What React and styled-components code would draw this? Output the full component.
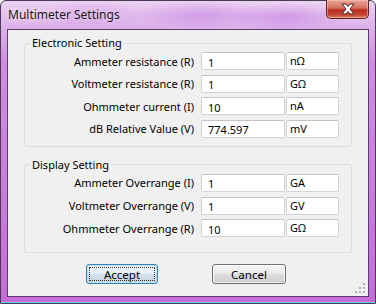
import React from 'react';
import styled, { createGlobalStyle } from 'styled-components';

const GlobalStyle = createGlobalStyle`
  html, body {
    margin: 0;
    padding: 0;
    background: #ffffff;
  }
  body {
    font-family: "Noto Sans", "DejaVu Sans", sans-serif;
    font-size: 11px;
    color: #000;
  }
`;

const electronic = [
  { label: 'Ammeter resistance (R)', value: '1', unit: 'nΩ' },
  { label: 'Voltmeter resistance (R)', value: '1', unit: 'GΩ' },
  { label: 'Ohmmeter current (I)', value: '10', unit: 'nA' },
  { label: 'dB Relative Value (V)', value: '774.597', unit: 'mV' },
];

const display = [
  { label: 'Ammeter Overrange (I)', value: '1', unit: 'GA' },
  { label: 'Voltmeter Overrange (V)', value: '1', unit: 'GV' },
  { label: 'Ohmmeter Overrange (R)', value: '10', unit: 'GΩ' },
];

const App = () => {
  return (
    <>
      <GlobalStyle />
      <Window>
        <TitleBar>
          <Title>Multimeter Settings</Title>
          <CloseButton aria-label="Close">
            <svg width="16" height="12" viewBox="0 0 16 12">
              <path
                d="M2 1 L6 1 L8 3.5 L10 1 L14 1 L10 6 L14 11 L10 11 L8 8.5 L6 11 L2 11 L6 6 Z"
                fill="#ffffff"
                stroke="#4a1e1e"
                strokeWidth="1"
                strokeLinejoin="round"
              />
            </svg>
          </CloseButton>
        </TitleBar>
        <Client>
          <Group>
            <Legend>Electronic Setting</Legend>
            <Rows>
              {electronic.map(row => (
                <React.Fragment key={row.label}>
                  <Label>{row.label}</Label>
                  <ValueBox>{row.value}</ValueBox>
                  <UnitBox>{row.unit}</UnitBox>
                </React.Fragment>
              ))}
            </Rows>
          </Group>

          <Group $bottom={15}>
            <Legend>Display Setting</Legend>
            <Rows>
              {display.map(row => (
                <React.Fragment key={row.label}>
                  <Label>{row.label}</Label>
                  <ValueBox>{row.value}</ValueBox>
                  <UnitBox>{row.unit}</UnitBox>
                </React.Fragment>
              ))}
            </Rows>
          </Group>

          <ButtonRow>
            <Button $default $width={72}>
              <FocusRing>Accept</FocusRing>
            </Button>
            <Button $width={74}>Cancel</Button>
          </ButtonRow>

          <Grip width="11" height="11" viewBox="0 0 11 11">
            {[[8, 0], [8, 4], [4, 4], [8, 8], [4, 8], [0, 8]].map(([x, y]) => (
              <rect key={`${x}-${y}`} x={x} y={y} width="2" height="2" fill="#b4b4b4" />
            ))}
          </Grip>
        </Client>
      </Window>
    </>
  );
};

const Window = styled.div`
  box-sizing: border-box;
  width: 376px;
  height: 304px;
  display: flex;
  flex-direction: column;
  border: 1px solid #4b3a55;
  border-radius: 6px 6px 0 0;
  padding: 0 6px 6px 6px;
  background:
    radial-gradient(ellipse 60px 14px at 90px 14px, rgba(190, 120, 225, 0.35), transparent),
    radial-gradient(ellipse 70px 14px at 200px 14px, rgba(180, 100, 220, 0.4), transparent),
    radial-gradient(ellipse 60px 14px at 285px 16px, rgba(180, 100, 220, 0.4), transparent),
    linear-gradient(to bottom, #ecd2f2 0px, #ddb2ea 26px, #cf8ee3 60px, #c46dd9 100%);
  box-shadow: inset 0 -1px 0 #5fd3e8;
`;

const TitleBar = styled.div`
  height: 28px;
  display: flex;
  justify-content: space-between;
  align-items: flex-start;
`;

const Title = styled.div`
  padding: 6px 0 0 1px;
  font-family: "Noto Sans", "DejaVu Sans", sans-serif;
  font-size: 12px;
  line-height: 16px;
  color: #1a1a1a;
  text-shadow: 0 0 6px rgba(255, 255, 255, 0.9);
`;

const CloseButton = styled.div`
  box-sizing: border-box;
  width: 43px;
  height: 19px;
  margin-top: -1px;
  display: flex;
  align-items: center;
  justify-content: center;
  border: 1px solid #5a2424;
  border-top: none;
  border-radius: 0 0 5px 5px;
  background: linear-gradient(to bottom, #e8a697 0%, #d46f5f 45%, #b92c1d 55%, #c94a36 85%, #e08a6c 100%);
  box-shadow: inset 0 0 0 1px rgba(255, 200, 190, 0.5);
`;

const Client = styled.div`
  position: relative;
  flex: 1;
  display: flex;
  flex-direction: column;
  border: 1px solid #5b3b6b;
  background: #f0f0f0;
  padding: 6px 16px 0 16px;
`;

const Group = styled.fieldset`
  margin: 0 0 11px 0;
  padding: 2px 12px ${props => props.$bottom || 8}px 0;
  border: 1px solid #d5dfe5;
  border-radius: 3px;
  min-width: 0;
`;

const Legend = styled.legend`
  margin-left: 5px;
  padding: 0 2px;
  font-size: 11px;
  line-height: 14px;
  color: #000;
`;

const Rows = styled.div`
  display: grid;
  grid-template-columns: 1fr 84px 54px;
  grid-auto-rows: 18px;
  row-gap: 4.67px;
  align-items: center;
`;

const Label = styled.div`
  text-align: right;
  padding-right: 7px;
  font-size: 11px;
  white-space: nowrap;
`;

const Field = styled.div`
  box-sizing: border-box;
  height: 18px;
  display: flex;
  align-items: center;
  background: #ffffff;
  border: 1px solid #d3d3d3;
  border-top-color: #c4c4c4;
  border-radius: 2px;
  font-size: 11px;
  white-space: nowrap;
`;

const ValueBox = styled(Field)`
  padding: 2px 0 0 6px;
`;

const UnitBox = styled(Field)`
  margin-left: 1px;
  padding: 0 0 1px 3px;
`;

const ButtonRow = styled.div`
  display: flex;
  padding-left: 62px;
  gap: 54px;
`;

const Button = styled.div`
  box-sizing: border-box;
  width: ${props => props.$width}px;
  height: 20px;
  display: flex;
  align-items: center;
  justify-content: center;
  border: 1px solid ${props => (props.$default ? '#3c7fb1' : '#707070')};
  border-radius: 3px;
  font-size: 11.5px;
  background: ${props =>
    props.$default
      ? 'linear-gradient(to bottom, #eef4f8 0%, #e3edf4 48%, #d2e0ea 52%, #c6d6e2 100%)'
      : 'linear-gradient(to bottom, #f2f2f2 0%, #ebebeb 48%, #dddddd 52%, #cfcfcf 100%)'};
  box-shadow: inset 0 0 0 1px ${props => (props.$default ? 'rgba(180, 225, 250, 0.9)' : 'rgba(255, 255, 255, 0.7)')};
`;

const FocusRing = styled.span`
  box-sizing: border-box;
  width: calc(100% - 6px);
  height: calc(100% - 6px);
  display: flex;
  align-items: center;
  justify-content: center;
  outline: 1px dotted #333;
`;

const Grip = styled.svg`
  position: absolute;
  right: 2px;
  bottom: 2px;
`;

export default App;
